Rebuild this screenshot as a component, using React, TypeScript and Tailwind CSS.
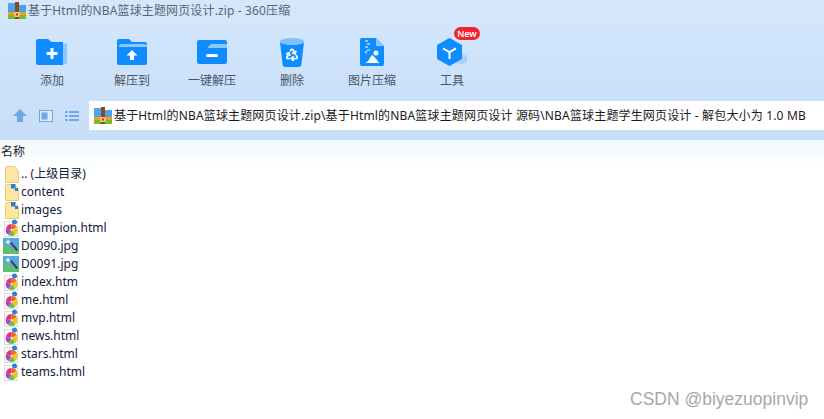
import React from "react";
import { Recycle } from "lucide-react";

const FONT = { fontFamily: '"Noto Sans", "Noto Sans CJK SC", sans-serif' };

function ZipIcon({ size = 18 }: { size?: number }) {
  return (
    <svg width={size} height={size} viewBox="0 0 18 18">
      <path d="M0 1h7l2 2h9v7H0z" fill="#4aa8f0" />
      <rect x="0" y="3" width="18" height="7" fill="#47a4ee" />
      <rect x="0" y="10" width="18" height="3" fill="#f59a23" />
      <rect x="0" y="13" width="18" height="4" fill="#79b93a" />
      <rect x="7" y="0" width="4" height="17" fill="#8a4b1c" />
      <rect x="6.500" y="10" width="5" height="5" fill="#f6cf72" />
      <rect x="8" y="11.500" width="2" height="2" fill="#8a4b1c" />
    </svg>
  );
}

function AddIcon() {
  return (
    <svg width="32" height="26" viewBox="0 0 32 26">
      <path d="M31 4.500h-5v21h3a2 2 0 0 0 2-2z" fill="#8cc6ff" />
      <path d="M2 0h10l3.500 3H27v23H2a2 2 0 0 1-2-2V2a2 2 0 0 1 2-2z" fill="#0f8cff" />
      <path d="M14.500 9h3v4h4v3h-4v4h-3v-4h-4v-3h4z" fill="#fff" />
    </svg>
  );
}

function ExtractIcon() {
  return (
    <svg width="30" height="26" viewBox="0 0 30 26">
      <path d="M2 0h10l3 3h13a2 2 0 0 1 2 2v19a2 2 0 0 1-2 2H2a2 2 0 0 1-2-2V2a2 2 0 0 1 2-2z" fill="#0f8cff" />
      <path d="M2 8a3 3 0 0 1 3-3h23l2 1v2z" fill="#8cc6ff" />
      <path d="M15 11l5.500 5.500H17V21h-4v-4.500H9.500z" fill="#fff" />
    </svg>
  );
}

function OneKeyIcon() {
  return (
    <svg width="30" height="24" viewBox="0 0 30 24">
      <path d="M2 0h26a2 2 0 0 1 2 2v20a2 2 0 0 1-2 2H2a2 2 0 0 1-2-2V2a2 2 0 0 1 2-2z" fill="#0f8cff" />
      <path d="M11 7l3-3h16v4H11z" fill="#8cc6ff" />
      <rect x="9" y="14" width="12" height="3" rx="1.500" fill="#fff" />
    </svg>
  );
}

function TrashIcon() {
  return (
    <svg width="24" height="29" viewBox="0 0 24 29">
      <path d="M0 4c3 3.500 21 3.500 24 0l-2.500 22a3 3 0 0 1-3 3h-13a3 3 0 0 1-3-3z" fill="#0f8cff" />
      <ellipse cx="12" cy="3.500" rx="12" ry="3.500" fill="#7fc0ff" />
      <Recycle x="5" y="9.500" width="14" height="14" color="#ffffff" strokeWidth={3} />
    </svg>
  );
}

function ImageZipIcon() {
  return (
    <svg width="24" height="28" viewBox="0 0 24 28">
      <path d="M2 0h14l8 8v18a2 2 0 0 1-2 2H2a2 2 0 0 1-2-2V2a2 2 0 0 1 2-2z" fill="#0f8cff" />
      <path d="M16 0l8 8h-8z" fill="#8cc6ff" />
      <path d="M5 2h3v2H5zM7 5h3v2H7zM5 8h3v2H5zM7 11h3v2H7z" fill="#8cc6ff" />
      <circle cx="6" cy="14" r="1.500" fill="#8cc6ff" />
      <circle cx="16" cy="15" r="2.500" fill="#fff" />
      <path d="M5 25c3 0 5-6 7-8 2 1 6 6 7 8z" fill="#fff" />
    </svg>
  );
}

function ToolIcon() {
  return (
    <svg width="30" height="28" viewBox="0 0 30 28">
      <path d="M24 15l6 3v6l-6 3-6-3v-6z" fill="#a7d2fd" />
      <path d="M12.500 0l12.500 7v14l-12.500 7L0 21V7z" fill="#0f8cff" />
      <path d="M6.500 9.500l6 3.500 6-3.500 1 1.700-6 3.600V21h-2v-6.200l-6-3.600z" fill="#fff" />
    </svg>
  );
}

function FolderFile({ badge }: { badge?: boolean }) {
  return (
    <svg width="14" height="17" viewBox="0 0 14 17">
      <path d="M.5 1.500a1 1 0 0 1 1-1H9.500L13.500 5v11.500H.5z" fill="#fde6a3" stroke="#efcb6b" />
      {badge && (
        <>
          <rect x="6" y="0" width="4.500" height="4.500" fill="#2f7fd8" />
          <rect x="10" y="4" width="3" height="3" fill="#2f7fd8" />
        </>
      )}
    </svg>
  );
}

function HtmlIcon() {
  return (
    <svg width="16" height="18" viewBox="0 0 16 18">
      <rect x="1.500" y="2.500" width="13" height="15" fill="#fdfdfd" stroke="#dddddd" />
      <path d="M8.500 11V5a6 6 0 0 1 5.300 3z" fill="#f26522" />
      <path d="M8.500 11l5.300-3a6 6 0 0 1-1.500 7.500z" fill="#f8c31c" />
      <path d="M8.500 11l3.800 4.500a6 6 0 0 1-7 .500z" fill="#63c04a" />
      <path d="M8.500 11l-3.200 5a6 6 0 0 1-2.300-6.500z" fill="#b23fd0" />
      <path d="M8.500 11L3 9.500A6 6 0 0 1 8.500 5z" fill="#e9306a" />
      <circle cx="8.500" cy="11" r="0.900" fill="#fff" />
      <circle cx="11.500" cy="3" r="2.500" fill="#2f7fd8" />
    </svg>
  );
}

function JpgIcon() {
  return (
    <svg width="16" height="16" viewBox="0 0 16 16">
      <rect width="16" height="16" fill="#58a9e2" />
      <path d="M0 8l4-2 5 6 7-3v7H0z" fill="#5fbf6a" />
      <path d="M7 5l1.300-1.300 6.700 8-1.500 1.500z" fill="#3a3f48" />
      <path d="M5 1l1 2 2 1-2 1-1 2-1-2-2-1 2-1z" fill="#d8eefc" />
    </svg>
  );
}

const tools = [
  { label: "添加", icon: <AddIcon /> },
  { label: "解压到", icon: <ExtractIcon /> },
  { label: "一键解压", icon: <OneKeyIcon /> },
  { label: "删除", icon: <TrashIcon /> },
  { label: "图片压缩", icon: <ImageZipIcon /> },
  { label: "工具", icon: <ToolIcon />, badge: true },
];

const files: { name: string; kind: "up" | "dir" | "html" | "jpg" }[] = [
  { name: ".. (上级目录)", kind: "up" },
  { name: "content", kind: "dir" },
  { name: "images", kind: "dir" },
  { name: "champion.html", kind: "html" },
  { name: "D0090.jpg", kind: "jpg" },
  { name: "D0091.jpg", kind: "jpg" },
  { name: "index.htm", kind: "html" },
  { name: "me.html", kind: "html" },
  { name: "mvp.html", kind: "html" },
  { name: "news.html", kind: "html" },
  { name: "stars.html", kind: "html" },
  { name: "teams.html", kind: "html" },
];

export default function App() {
  return (
    <div className="relative flex h-[419px] w-[824px] flex-col overflow-hidden bg-white" style={FONT}>
      <div className="flex h-[140px] flex-col bg-gradient-to-b from-[#d4e7fc] to-[#c7def8]">
        <div className="flex h-[22px] items-center gap-[2px] pl-[8px] text-[12px] tracking-[0.14px] text-[#5c6670]">
          <ZipIcon />
          <span>基于Html的NBA篮球主题网页设计.zip - 360压缩</span>
        </div>
        <div className="flex h-[79px] pl-[12px]">
          {tools.map((t) => (
            <div key={t.label} className="relative flex w-[80px] flex-col items-center">
              <div className="mt-[15px] flex h-[30px] items-center justify-center">{t.icon}</div>
              <span className="mt-[6px] text-[12px] leading-[16px] text-[#4a5560]">{t.label}</span>
              {t.badge && (
                <span className="absolute left-[42px] top-[5px] flex h-[13px] w-[26px] items-center justify-center rounded-full bg-[#f5222d] text-[9px] font-semibold leading-none text-white">
                  New
                </span>
              )}
            </div>
          ))}
        </div>
        <div className="flex h-[29px] items-center">
          <div className="flex w-[89px] items-center gap-[12px] pl-[13px]">
            <svg width="14" height="13" viewBox="0 0 14 13">
              <path d="M7 0l7 7H10v6H4V7H0z" fill="#6ea6ea" />
            </svg>
            <svg width="14" height="12" viewBox="0 0 14 12">
              <rect x="0.500" y="0.500" width="13" height="11" fill="#dbe9fb" stroke="#6ea6ea" />
              <rect x="2.500" y="2.500" width="6" height="7" fill="#6ea6ea" />
            </svg>
            <svg width="14" height="12" viewBox="0 0 14 12">
              <path d="M0 1h2.500v2H0zM4 1h10v2H4zM0 5h2.500v2H0zM4 5h10v2H4zM0 9h2.500v2H0zM4 9h10v2H4z" fill="#6ea6ea" />
            </svg>
          </div>
          <div className="flex h-[29px] flex-1 items-center gap-[2px] bg-white pl-[5px] text-[12px] tracking-[0.16px] text-[#1a1a1a]">
            <ZipIcon />
            <span>基于Html的NBA篮球主题网页设计.zip\基于Html的NBA篮球主题网页设计 源码\NBA篮球主题学生网页设计 - 解包大小为 1.0 MB</span>
          </div>
        </div>
      </div>
      <div className="flex h-[25px] items-center bg-gradient-to-b from-[#f2f8ff] to-white pb-[2px] pl-[1px] text-[12px] text-[#222]">
        名称
      </div>
      <div className="flex flex-col">
        {files.map((f) => (
          <div key={f.name} className="flex h-[18px] items-center text-[12px] text-[#10203a]">
            <span className="flex w-[21px] justify-center pl-[1px]">
              {f.kind === "up" && <span className="ml-[2px] flex"><FolderFile /></span>}
              {f.kind === "dir" && <span className="ml-[2px] flex"><FolderFile badge /></span>}
              {f.kind === "html" && <HtmlIcon />}
              {f.kind === "jpg" && <JpgIcon />}
            </span>
            <span>{f.name}</span>
          </div>
        ))}
      </div>
      <span
        className="absolute left-[630px] top-[389px] text-[17.5px] leading-[20px] text-[#a8a8a8]"
        style={{ fontFamily: '"Liberation Sans", sans-serif' }}
      >
        CSDN @biyezuopinvip
      </span>
    </div>
  );
}
